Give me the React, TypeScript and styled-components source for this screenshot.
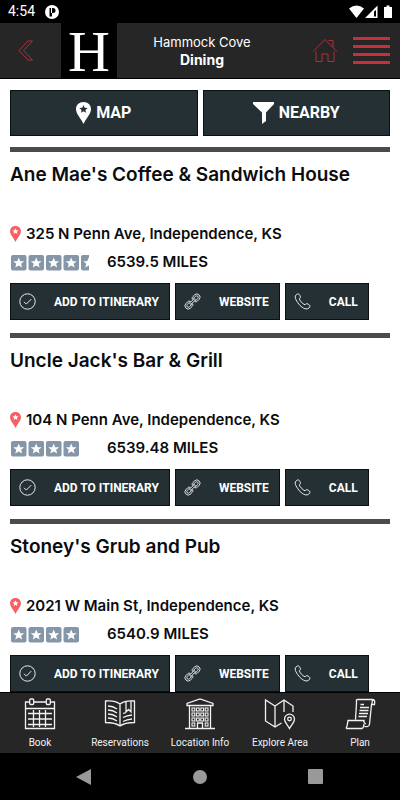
import React from "react";
import styled, { createGlobalStyle } from "styled-components";

const GlobalStyle = createGlobalStyle`
  * { box-sizing: border-box; }
  body { margin: 0; background: #fff; font-family: Inter, sans-serif; color: #0b0c0e; }
  button, a { font: inherit; color: inherit; text-decoration: none; }
  button { border: 0; padding: 0; background: none; cursor: pointer; }
  svg { display: block; flex: none; }
`;

const Screen = styled.div`
  display: flex;
  flex-direction: column;
  height: 100vh;
`;

const StatusBar = styled.div`
  display: flex;
  align-items: center;
  flex: none;
  height: 23px;
  padding: 0 7px 0 8px;
  background: #000;
  color: #fff;
  font: 400 14px/23px Roboto, sans-serif;
`;

const AppMark = styled.svg`
  margin-left: 10px;
  margin-right: auto;
`;

const Header = styled.header`
  display: grid;
  grid-template-columns: 61px 56px 1fr 113px;
  align-items: center;
  flex: none;
  height: 56px;
  background: #262626;
  border-bottom: 1px solid #000;
`;

const BackButton = styled.button`
  padding-left: 18px;
  height: 55px;
`;

const Logo = styled.div`
  display: flex;
  justify-content: center;
  height: 55px;
  background: #000;
  color: #fff;
  font: 58px/58px "Liberation Serif", serif;
`;

const Heading = styled.div`
  color: #fff;
  text-align: center;
  white-space: nowrap;
`;

const Place = styled.div`
  font: 13px/18px Inter, sans-serif;
`;

const PageTitle = styled.h1`
  margin: 0;
  font: 700 14px/18px Inter, sans-serif;
`;

const HeaderActions = styled.div`
  display: flex;
  align-items: center;
  justify-content: flex-end;
  gap: 15px;
  padding-right: 10px;
`;

const Main = styled.main`
  flex: 1;
  min-height: 0;
  overflow-y: auto;
  scrollbar-width: none;
  padding: 11px 10px 0;
`;

const Tools = styled.div`
  display: grid;
  grid-template-columns: 1fr 1fr;
  gap: 5px;
  margin-bottom: 11px;
`;

const ToolButton = styled.button`
  display: flex;
  align-items: center;
  justify-content: center;
  gap: 5px;
  height: 46px;
  border: 1px solid #0b1012;
  background: #253034;
  color: #fff;
  font: 700 16px/20px Roboto, sans-serif;
`;

const Card = styled.article`
  height: 186px;
  border-top: 5px solid #4b4b4b;
`;

const Name = styled.h2`
  margin: 0 0 37px;
  padding-top: 10px;
  font: 600 19px/26px Inter, sans-serif;
  white-space: nowrap;
`;

const Address = styled.a`
  display: flex;
  align-items: center;
  gap: 5px;
  height: 18px;
  font: 600 15px/18px Inter, sans-serif;
`;

const Meta = styled.div`
  display: grid;
  grid-template-columns: 97px 1fr;
  align-items: center;
  height: 18px;
  margin: 10px 0 12px;
  font: 600 15px/18px Inter, sans-serif;
`;

const Actions = styled.div`
  display: flex;
  gap: 5px;
`;

const Action = styled.button`
  display: flex;
  align-items: center;
  gap: 18px;
  height: 37px;
  padding: 0 10px 0 8px;
  border: 1px solid #0b1012;
  background: #253034;
  color: #fff;
  font: 700 12px/20px Roboto, sans-serif;
  white-space: nowrap;
`;

const TabBar = styled.nav`
  display: grid;
  grid-template-columns: repeat(5, 1fr);
  flex: none;
  height: 61px;
  border-top: 1px solid #000;
  background: #262626;
  color: #f2f2f2;
`;

const Tab = styled.a`
  display: flex;
  flex-direction: column;
  align-items: center;
  gap: 4px;
  padding-top: 5px;
  font: 10px/18px Roboto, sans-serif;
  white-space: nowrap;
`;

const SystemBar = styled.div`
  display: flex;
  align-items: center;
  justify-content: space-between;
  flex: none;
  height: 47px;
  padding: 0 77px 0 76px;
  background: #000;
`;

const STAR = "M0-5 1.4-1.7 5-1.5 2.2.7 3.1 4.2 0 2.2-3.1 4.2-2.2.7-5-1.5-1.4-1.7Z";

function Stars({ rating }: { rating: number }) {
  const width = Math.ceil(rating * 17.5);
  return (
    <svg width={width} height="17" viewBox={`0 0 ${width} 17`} role="img" aria-label={`${rating} stars`}>
      {[0, 1, 2, 3, 4].map((i) => (
        <g key={i} transform={`translate(${i * 17.5 + 1} 1)`}>
          <rect width="15.5" height="15.5" rx="2" fill="#8496a7" />
          <path d={STAR} transform="translate(7.7 8) scale(1.1)" fill="#fff" />
        </g>
      ))}
    </svg>
  );
}

function Pin({ size, fill, star }: { size: number; fill: string; star: string }) {
  return (
    <svg width={size === 22 ? 15 : 11} height={size} viewBox="0 0 15 22" aria-hidden="true">
      <path d="M7.5 0C3 0 0 3 0 7.2 0 12 5.5 17 7.5 22 9.5 17 15 12 15 7.2 15 3 12 0 7.5 0Z" fill={fill} />
      <path d={STAR} transform="translate(7.5 7.3) scale(.85)" fill={star} />
    </svg>
  );
}

const thin = { fill: "none", stroke: "currentColor", strokeWidth: 1 };

function ActionIcon({ kind }: { kind: "check" | "link" | "phone" }) {
  return (
    <svg width="17" height="17" viewBox="0 0 17 17" aria-hidden="true" {...thin} strokeWidth={0.9}>
      {kind === "check" && (
        <>
          <circle cx="8.5" cy="8.5" r="7.7" />
          <path d="m5 8.8 2.3 2.3 5-5" />
        </>
      )}
      {kind === "link" && (
        <g transform="rotate(-45 8.5 8.5)" strokeWidth="0.8">
          <path d="M7 10.2C6.6 11.2 5.8 11.7 4.8 11.7H2.4A3.2 3.2 0 0 1 2.4 5.3H4.8C5.8 5.3 6.6 5.8 7 6.8H5C4 6.8 3.6 7 2.6 7A1.5 1.5 0 0 0 2.6 10Z" />
          <path d="M10 6.8C10.4 5.8 11.2 5.3 12.2 5.3H14.6A3.2 3.2 0 0 1 14.6 11.7H12.2C11.2 11.7 10.4 11.2 10 10.2L14.4 10A1.5 1.5 0 0 0 14.4 7Z" />
          <rect x="5" y="7.6" width="7" height="1.8" rx="0.9" />
        </g>
      )}
      {kind === "phone" && (
        <path d="M2.2 1.8C4 .2 5.2.9 6 2.7c.8 1.7.4 2.2-.7 3.1.8 2.4 3.1 4.9 5.7 6 .9-1.2 1.6-1.5 3.2-.6 1.7.9 2.4 2 .9 3.6-2.3 2.4-6 .7-9.2-2.4C3.2 9-.6 4.3 2.2 1.8Z" />
      )}
    </svg>
  );
}

type TabKind = "book" | "reservations" | "info" | "explore" | "plan";

function TabIcon({ kind }: { kind: TabKind }) {
  return (
    <svg width="32" height="32" viewBox="0 0 32 32" aria-hidden="true" {...thin} strokeWidth={1.3}>
      {kind === "book" && (
        <>
          <path d="M5.5 4H1.5V30.5H30.5V4H26.5M9.5 4H22.5M1.5 10.5H30.5" />
          <rect x="5.7" y="1" width="4" height="5.5" rx="1" />
          <rect x="22.3" y="1" width="4" height="5.5" rx="1" />
          <path d="M4 15.5H28M4 21H28M4 26.5H28M9.5 12V29M15.5 12V29M21.5 12V29" />
        </>
      )}
      {kind === "reservations" && (
        <>
          <path d="M16 6C12 3 7 2.5 1.5 3V24.5C7 24.5 12 25 16 28 20 25 25 24.5 30.5 24.5V3C25 2.5 20 3 16 6ZM16 6V28" />
          <path d="M4 8q5 0 9 3M4 12q5 0 9 3M4 16q5 0 9 3M4 20q5 0 9 3M19 19.5q4-2 9-2.5M19 23.5q4-2 9-2.5M19 15.5l3-1M22 4v10l2.5-2.5L27 14V3" />
        </>
      )}
      {kind === "info" && (
        <>
          <path d="M1 30.5H31M5.5 30V7M26.5 30V7M3 7.5H29V5.5L16 1 3 5.5ZM13.5 30V25H18.5V30" />
          {[10, 15, 20].map((y) =>
            [8, 12.4, 16.8, 21.2].map((x) => <rect key={`${x}-${y}`} x={x} y={y} width="2.8" height="3" strokeWidth="1.1" />),
          )}
          <rect x="8" y="25" width="2.8" height="3" strokeWidth="1.1" />
          <rect x="21.2" y="25" width="2.8" height="3" strokeWidth="1.1" />
        </>
      )}
      {kind === "explore" && (
        <>
          <path d="M17.5 25 11 29 1.5 23V2L11 8 20 2 29 8V14M11 8V29M20 2V14" />
          <path d="M25.5 30.5C23.5 26.5 20.5 24.5 20.5 21.2A5 5 0 0 1 30.5 21.2C30.5 24.5 27.5 26.5 25.5 30.5Z" />
          <circle cx="25.5" cy="21" r="1.8" />
        </>
      )}
      {kind === "plan" && (
        <>
          <path d="M11.5 21.5 12.5 5C12.7 2.5 11.5 1.5 14 1.5H28.5C30.8 1.5 31 3 30.5 6.5H27.5L25.5 26C25 29.5 23 28.5 20.5 28.5M2 30.5C3.5 28 3.5 25 4 22.5H20C19.5 25 20.5 25.5 22 26M2 30.5H18C20 30 19.5 28 20 26M28 6C28 3.5 28.5 2 29.5 2" />
          <path d="M16.5 6.5H20M16 9.5H25M15.5 12.5H24.5M15 15.5H24M14.5 18.5H23" />
        </>
      )}
    </svg>
  );
}

const places = [
  { name: "Ane Mae's Coffee & Sandwich House", address: "325 N Penn Ave, Independence, KS", rating: 4.5, miles: "6539.5 MILES" },
  { name: "Uncle Jack's Bar & Grill", address: "104 N Penn Ave, Independence, KS", rating: 4, miles: "6539.48 MILES" },
  { name: "Stoney's Grub and Pub", address: "2021 W Main St, Independence, KS", rating: 4, miles: "6540.9 MILES" },
];

const tabs: { kind: TabKind; label: string }[] = [
  { kind: "book", label: "Book" },
  { kind: "reservations", label: "Reservations" },
  { kind: "info", label: "Location Info" },
  { kind: "explore", label: "Explore Area" },
  { kind: "plan", label: "Plan" },
];

export default function App() {
  return (
    <Screen>
      <GlobalStyle />
      <StatusBar>
        <span>4:54</span>
        <AppMark width="14" height="14" viewBox="0 0 14 14" aria-hidden="true">
          <circle cx="7" cy="7" r="7" fill="#fff" />
          <path d="M4.5 3H8a2.5 2.5 0 0 1 0 5H7v3.5H4.5Z" fill="#000" />
          <path d="M6 3h1v5H6Z" fill="#fff" />
        </AppMark>
        <svg width="44" height="14" viewBox="0 0 44 14" fill="#fff" aria-hidden="true">
          <path d="M0 3.5Q7.5-2.5 15 3.5L7.5 13Z" />
          <path d="M28.5.5V13H16ZM25 6.5V11.5H27V5Z" fillRule="evenodd" />
          <path d="M35 2h2.5V.5h3V2H43v11H35Z" />
        </svg>
      </StatusBar>

      <Header>
        <BackButton aria-label="Back">
          <svg width="16" height="21" viewBox="0 0 16 21" fill="none" stroke="#b52d3a">
            <path d="M10 1h4.5L5.5 10.5 14.5 20H10L1 10.5Z" />
          </svg>
        </BackButton>
        <Logo>H</Logo>
        <Heading>
          <Place>Hammock Cove</Place>
          <PageTitle>Dining</PageTitle>
        </Heading>
        <HeaderActions>
          <button aria-label="Home">
            <svg width="26" height="25" viewBox="0 0 26 25" fill="none" stroke="#b52d3a">
              <path d="M1 13.5 13 1.5 25 13.5M16.5 2.5H21V9M4 13.5V23.5H10V16H16V23.5H22V13.5" />
            </svg>
          </button>
          <button aria-label="Menu">
            <svg width="37" height="27" viewBox="0 0 37 27" fill="#c5303c">
              <path d="M0 0h37v3H0ZM0 8h37v3H0ZM0 16h37v3H0ZM0 24h37v3H0Z" />
            </svg>
          </button>
        </HeaderActions>
      </Header>

      <Main>
        <Tools>
          <ToolButton>
            <Pin size={22} fill="#fff" star="#253034" />
            MAP
          </ToolButton>
          <ToolButton>
            <svg width="21" height="22" viewBox="0 0 21 22" fill="#fff" aria-hidden="true">
              <path d="M0 0h21v2l-8 8.5V19l-4 3V10.5L0 2Z" />
            </svg>
            NEARBY
          </ToolButton>
        </Tools>
        {places.map((place) => (
          <Card key={place.name}>
            <Name>{place.name}</Name>
            <Address href="#map">
              <Pin size={16} fill="#f95e62" star="#fff" />
              {place.address}
            </Address>
            <Meta>
              <Stars rating={place.rating} />
              <span>{place.miles}</span>
            </Meta>
            <Actions>
              <Action><ActionIcon kind="check" />ADD TO ITINERARY</Action>
              <Action><ActionIcon kind="link" />WEBSITE</Action>
              <Action><ActionIcon kind="phone" />CALL</Action>
            </Actions>
          </Card>
        ))}
      </Main>

      <TabBar>
        {tabs.map((tab) => (
          <Tab key={tab.kind} href={`#${tab.kind}`}>
            <TabIcon kind={tab.kind} />
            {tab.label}
          </Tab>
        ))}
      </TabBar>

      <SystemBar>
        <button aria-label="System back">
          <svg width="15" height="16" viewBox="0 0 15 16" fill="#999"><path d="M15 0v16L0 8Z" /></svg>
        </button>
        <button aria-label="System home">
          <svg width="14" height="14" viewBox="0 0 14 14" fill="#999"><circle cx="7" cy="7" r="7" /></svg>
        </button>
        <button aria-label="Recent apps">
          <svg width="15" height="15" viewBox="0 0 15 15" fill="#999"><rect width="15" height="15" rx="1" /></svg>
        </button>
      </SystemBar>
    </Screen>
  );
}
